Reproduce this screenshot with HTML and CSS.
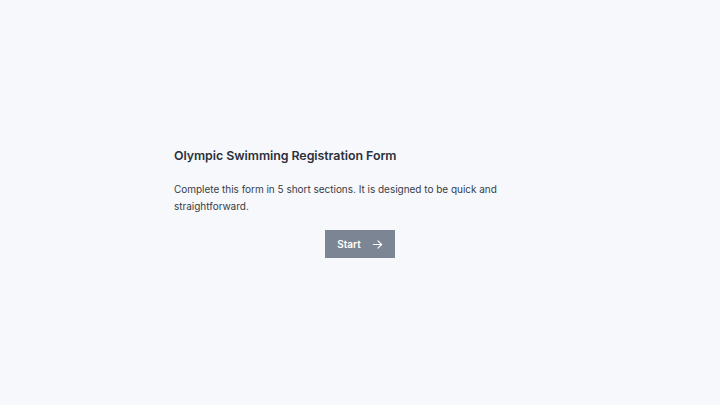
FILE: index.html
```html
<!DOCTYPE html>
<html lang="en">
<head>
    <meta charset="UTF-8">
    <meta name="viewport" content="width=device-width, initial-scale=1.0">
    <title>Olympic Swimming Registration</title>
    <link rel="stylesheet" href="styles.css">
</head>
<body>
    <main class="intro">
        <h1 class="intro-title">Olympic Swimming Registration Form</h1>
        <p class="intro-text">Complete this form in 5 short sections. It is designed to be quick and straightforward.</p>
        <div class="intro-actions">
            <button class="start-btn" type="button">
                <span>Start</span>
                <svg width="11" height="11" viewBox="0 0 24 24" fill="none" stroke="currentColor" stroke-width="2.4" stroke-linecap="round" stroke-linejoin="round">
                    <path d="M3 12h18"/>
                    <path d="M13 4l8 8-8 8"/>
                </svg>
            </button>
        </div>
    </main>
</body>
</html>
```

FILE: styles.css
```css
html, body {
    height: 100%;
}

body {
    margin: 0;
    background-color: #f7f8fb;
    font-family: 'Inter', 'Liberation Sans', sans-serif;
    color: #2a303c;
    display: flex;
    justify-content: center;
    align-items: center;
}

.intro {
    width: 372px;
}

.intro-title {
    font-size: 12.4px;
    font-weight: 600;
    margin: 0 0 15.5px;
    line-height: 18px;
    letter-spacing: -0.05px;
}

.intro-text {
    font-size: 10px;
    line-height: 17px;
    margin: 0 0 15.5px;
    color: #363c48;
    letter-spacing: -0.02px;
}

.intro-actions {
    display: flex;
    justify-content: center;
}

.start-btn {
    display: flex;
    align-items: center;
    gap: 11px;
    height: 28px;
    padding: 0 12.5px;
    border: none;
    background-color: #7b8594;
    color: #fff;
    font-family: inherit;
    font-size: 10px;
    font-weight: 600;
    cursor: pointer;
}
```
